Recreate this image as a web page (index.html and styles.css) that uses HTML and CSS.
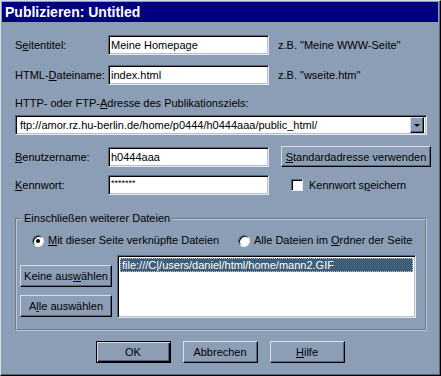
FILE: index.html
```html
<!DOCTYPE html>
<html lang="de">
<head>
    <meta charset="UTF-8">
    <title>Publizieren: Untitled</title>
    <link rel="stylesheet" href="styles.css">
</head>
<body>
    <div class="window">
        <div class="titlebar">Publizieren: Untitled</div>

        <div class="dialog">
            <div class="row row-title">
                <label class="label" for="title">S<u>e</u>itentitel:</label>
                <input class="field" id="title" type="text" value="Meine Homepage">
                <span class="hint">z.B. "Meine WWW-Seite"</span>
            </div>
            <div class="row row-file">
                <label class="label" for="file">HTML-<u>D</u>ateiname:</label>
                <input class="field" id="file" type="text" value="index.html">
                <span class="hint">z.B. "wseite.htm"</span>
            </div>

            <div class="addr-label">HTTP- oder FTP-<u>A</u>dresse des Publikationsziels:</div>
            <div class="combo">
                <span class="combo-text">ftp://amor.rz.hu-berlin.de/home/p0444/h0444aaa/public_html/</span>
                <span class="combo-btn"><span class="arrow"></span></span>
            </div>

            <div class="row row-user">
                <label class="label" for="user"><u>B</u>enutzername:</label>
                <input class="field" id="user" type="text" value="h0444aaa">
                <button class="btn btn-std" type="button"><u>S</u>tandardadresse verwenden</button>
            </div>
            <div class="row row-pass">
                <label class="label" for="pass"><u>K</u>ennwort:</label>
                <input class="field field-pass" id="pass" type="text" value="*******">
                <span class="check"></span>
                <span class="check-label">Kennwort s<u>p</u>eichern</span>
            </div>

            <fieldset class="group">
                <legend>Einschließen weiterer Dateien</legend>
                <div class="radios">
                    <div class="radio-item radio-first">
                        <span class="radio checked"></span>
                        <span><u>M</u>it dieser Seite verknüpfte Dateien</span>
                    </div>
                    <div class="radio-item">
                        <span class="radio"></span>
                        <span>Alle Dateien im <u>O</u>rdner der Seite</span>
                    </div>
                </div>
                <div class="files">
                    <div class="file-buttons">
                        <button class="btn btn-side" type="button">Keine aus<u>w</u>ählen</button>
                        <button class="btn btn-side" type="button">A<u>l</u>le auswählen</button>
                    </div>
                    <div class="listbox">
                        <div class="list-item selected">file:///C|/users/daniel/html/home/mann2.GIF</div>
                    </div>
                </div>
            </fieldset>
        </div>

        <div class="actions">
            <button class="btn btn-action btn-default" type="button">OK</button>
            <button class="btn btn-action" type="button">Abbrechen</button>
            <button class="btn btn-action" type="button"><u>H</u>ilfe</button>
        </div>
    </div>
</body>
</html>
```

FILE: styles.css
```css
body {
    margin: 0;
    background-color: #8c9eb6;
    font-family: "Liberation Sans", Arial, sans-serif;
    font-size: 11px;
    color: #000;
}
u {
    text-underline-offset: 1px;
}
.window {
    width: 441px;
    height: 376px;
    box-sizing: border-box;
    padding: 1px 2px 1px 1px;
    border: 1px solid;
    border-color: #d6dee8 #000 #000 #d6dee8;
    box-shadow: inset -1px -1px #56657a;
}
.titlebar {
    height: 20px;
    line-height: 20px;
    padding-left: 3px;
    background-color: #000080;
    color: #fff;
    font-size: 14px;
    font-weight: bold;
}
.dialog {
    padding-left: 13px;
}
.row {
    display: flex;
    align-items: center;
    height: 20px;
}
.row-title {
    margin-top: 13px;
}
.row-file {
    margin-top: 10px;
}
.label {
    width: 93px;
}
.field,
.combo,
.listbox {
    box-sizing: border-box;
    background-color: #fff;
    border: 1px solid;
    border-color: #56657a #e4eaf0 #e4eaf0 #56657a;
    box-shadow: inset 1px 1px #000, inset -1px -1px #b4c0ce;
}
.field {
    width: 161px;
    height: 20px;
    margin: 0;
    padding: 0 2px;
    font: inherit;
    color: #000;
    outline: none;
}
.field-pass {
    padding-bottom: 5px;
    font-size: 9px;
}
.hint {
    margin-left: 9px;
}
.addr-label {
    margin-top: 12px;
    line-height: 13px;
}
.combo {
    display: flex;
    align-items: center;
    width: 412px;
    height: 20px;
    margin-top: 5px;
    padding: 2px;
}
.combo-text {
    flex: 1;
    padding-left: 2px;
}
.combo-btn {
    display: flex;
    align-items: center;
    justify-content: center;
    width: 14px;
    height: 16px;
    box-sizing: border-box;
    background-color: #8c9eb6;
    border: 1px solid;
    border-color: #d6dee8 #000 #000 #d6dee8;
    box-shadow: inset -1px -1px #56657a;
}
.arrow {
    width: 0;
    height: 0;
    border-left: 3px solid transparent;
    border-right: 3px solid transparent;
    border-top: 3px solid #000;
}
.btn {
    box-sizing: border-box;
    margin: 0;
    padding: 0;
    background-color: #8c9eb6;
    border: 1px solid;
    border-color: #d6dee8 #000 #000 #d6dee8;
    box-shadow: inset -1px -1px #56657a;
    font: inherit;
    color: #000;
}
.row-user {
    height: 21px;
    margin-top: 11px;
}
.btn-std {
    width: 150px;
    height: 21px;
    margin-left: 12px;
}
.row-pass {
    margin-top: 8px;
}
.check {
    width: 12px;
    height: 12px;
    box-sizing: border-box;
    margin-left: 22px;
    background-color: #fff;
    border: 1px solid;
    border-color: #56657a #e4eaf0 #e4eaf0 #56657a;
    box-shadow: inset 1px 1px #000;
}
.check-label {
    margin-left: 6px;
}
.group {
    width: 412px;
    height: 119px;
    box-sizing: border-box;
    margin: 17px 0 0;
    padding: 0;
    border: 2px groove #b8c6d6;
}
.group legend {
    margin-left: 5px;
    padding: 0 2px;
    line-height: 13px;
}
.radios {
    display: flex;
    align-items: center;
    margin-top: 9px;
    padding-left: 15px;
    line-height: 13px;
}
.radio-item {
    display: flex;
    align-items: center;
    gap: 4px;
}
.radio-first {
    width: 206px;
}
.radio {
    position: relative;
    width: 12px;
    height: 12px;
    box-sizing: border-box;
    border-radius: 50%;
    background-color: #fff;
    border: 1px solid;
    border-color: #56657a #e4eaf0 #e4eaf0 #56657a;
    box-shadow: inset 1px 1px #000;
}
.radio.checked::after {
    content: "";
    position: absolute;
    left: 3px;
    top: 3px;
    width: 4px;
    height: 4px;
    border-radius: 50%;
    background-color: #000;
}
.files {
    display: flex;
    margin-top: 8px;
    padding-left: 3px;
}
.file-buttons {
    display: flex;
    flex-direction: column;
    gap: 8px;
    padding-top: 10px;
}
.btn-side {
    width: 92px;
    height: 22px;
}
.listbox {
    width: 299px;
    height: 63px;
    margin-left: 5px;
    padding: 2px;
}
.list-item {
    height: 14px;
    line-height: 14px;
    padding-left: 2px;
}
.selected {
    background-color: #3f5e78;
    color: #fff;
    outline: 1px dotted #b8c6d6;
    outline-offset: -1px;
}
.actions {
    display: flex;
    justify-content: center;
    gap: 12px;
    margin-top: 10px;
}
.btn-action {
    width: 75px;
    height: 22px;
}
.btn-default {
    border: 1px solid #000;
    box-shadow: inset 1px 1px #d6dee8, inset -1px -1px #000, inset -2px -2px #56657a;
}
```
